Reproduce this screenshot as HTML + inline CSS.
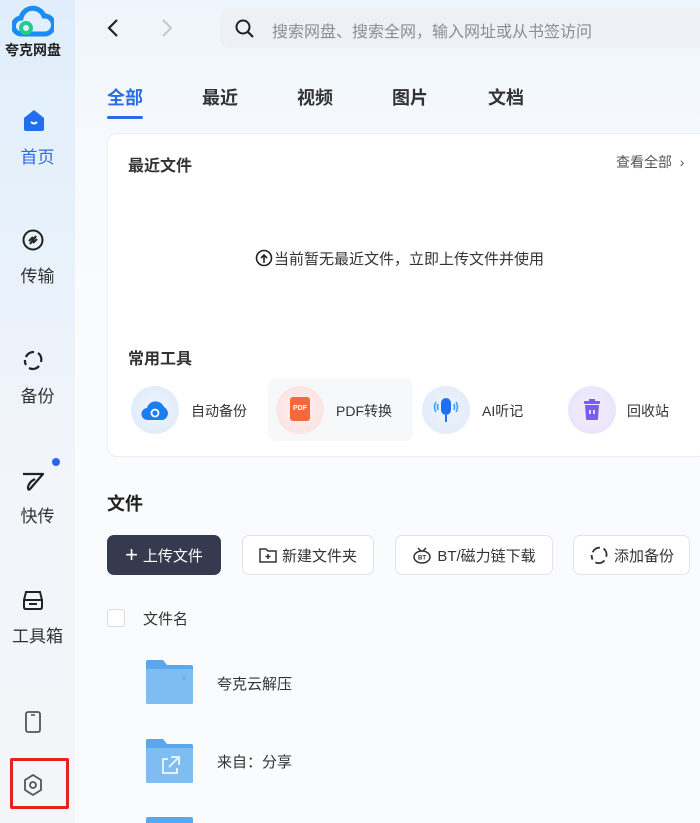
<!DOCTYPE html>
<html style="width:700px;height:823px;overflow:hidden"><head><meta charset="utf-8"><style>
*{margin:0;padding:0;box-sizing:border-box}
body{width:700px;height:823px;overflow:hidden;position:relative;font-family:"Liberation Sans","Noto Sans CJK SC",sans-serif;background:linear-gradient(180deg,#eef5fc 0px,#f6f9fd 140px,#fafbfd 300px,#fafbfc 100%);color:#222}
.a{position:absolute;white-space:nowrap}
#side{position:absolute;left:0;top:0;width:75px;height:823px;background:linear-gradient(180deg,#e0eefb 0,#e9f2fb 280px,#f3f5fa 500px,#f4f5f9 100%)}
.nav{position:absolute;left:0;width:75px;text-align:center;font-size:17px;color:#333}
.card{position:absolute;left:107px;top:133px;width:600px;height:324px;background:#fff;border:1px solid #eceef2;border-radius:10px}
.btn{position:absolute;top:535px;height:40px;border:1px solid #e2e4e9;border-radius:7px;background:#fff;font-size:15px;color:#333;display:flex;align-items:center;justify-content:center;gap:5px}
.circ{position:absolute;width:48px;height:48px;border-radius:50%}
.tl{position:absolute;font-size:14px;color:#333}
.fold{position:absolute;left:146px;width:47px;height:44px}
</style></head><body>
<div id="side">
<svg class="a" style="left:12px;top:4px" width="42" height="34" viewBox="0 0 42 34"><path d="M10 30 A8 8 0 0 1 9 14 A12 12 0 0 1 32 12 A9 9 0 0 1 33 30 Z" fill="none" stroke="#1b8cf5" stroke-width="5"/><circle cx="14" cy="24" r="5" fill="none" stroke="#27c98d" stroke-width="4"/></svg>
<div class="a" style="left:5px;top:40px;font-size:14px;font-weight:bold;color:#222">夸克网盘</div>
<svg class="a" style="left:22px;top:109px" width="24" height="22" viewBox="0 0 24 22"><path d="M2 9 L12 1 L22 9 V20 Q22 22 20 22 H4 Q2 22 2 20Z" fill="#1f6ff0"/><path d="M9 13 Q12 16 15 13" stroke="#fff" stroke-width="2" fill="none"/></svg>
<div class="nav" style="top:143px;color:#2a6ae8">首页</div>
<svg class="a" style="left:22px;top:229px" width="22" height="22" viewBox="0 0 22 22"><circle cx="11" cy="11" r="9.5" fill="none" stroke="#222" stroke-width="2"/><path d="M7 12 L11 8 M11 14 L15 10 M8 15 L14 7" stroke="#222" stroke-width="2"/></svg>
<div class="nav" style="top:262px">传输</div>
<svg class="a" style="left:22px;top:349px" width="22" height="22" viewBox="0 0 22 22"><path d="M4 8 A8 8 0 0 1 12 3 M16 4 A8 8 0 0 1 19 13 M17 17 A8 8 0 0 1 7 19 M4 16 A8 8 0 0 1 3 11" fill="none" stroke="#222" stroke-width="2.2"/></svg>
<div class="nav" style="top:382px">备份</div>
<svg class="a" style="left:21px;top:470px" width="24" height="22" viewBox="0 0 24 22"><path d="M2 4 L22 4 L9 19 Q7 21 7 17 Q8 12 14 9" fill="none" stroke="#222" stroke-width="2.2" stroke-linejoin="round"/></svg>
<div class="a" style="left:52px;top:458px;width:8px;height:8px;border-radius:50%;background:#2a64f0"></div>
<div class="nav" style="top:502px">快传</div>
<svg class="a" style="left:21px;top:589px" width="24" height="22" viewBox="0 0 24 22"><path d="M5 3 H19 L21 11 V18 Q21 20 19 20 H5 Q3 20 3 18 V11Z M3 11 H21 M8 15 H16" fill="none" stroke="#222" stroke-width="2"/></svg>
<div class="nav" style="top:622px">工具箱</div>
<svg class="a" style="left:24px;top:710px" width="18" height="24" viewBox="0 0 18 24"><rect x="2" y="2" width="14" height="20" rx="2" fill="none" stroke="#555" stroke-width="1.8"/><path d="M7 5 H11" stroke="#555" stroke-width="1.6"/></svg>
<div class="a" style="left:10px;top:758px;width:59px;height:51px;border:3px solid #e5231e;border-radius:2px"></div>
<svg class="a" style="left:22px;top:773px" width="22" height="24" viewBox="0 0 22 24"><path d="M11 2 L19 7 V17 L11 22 L3 17 V7Z" fill="none" stroke="#555" stroke-width="1.8" stroke-linejoin="round"/><circle cx="11" cy="12" r="3" fill="none" stroke="#555" stroke-width="1.8"/></svg>
</div>
<svg class="a" style="left:106px;top:18px" width="14" height="20" viewBox="0 0 14 20"><path d="M11 2 L3 10 L11 18" fill="none" stroke="#222" stroke-width="2.2"/></svg>
<svg class="a" style="left:160px;top:18px" width="14" height="20" viewBox="0 0 14 20"><path d="M3 2 L11 10 L3 18" fill="none" stroke="#c4c7cd" stroke-width="2"/></svg>
<div class="a" style="left:220px;top:8px;width:490px;height:40px;border-radius:10px;background:#edf0f5"></div>
<svg class="a" style="left:234px;top:18px" width="22" height="22" viewBox="0 0 22 22"><circle cx="9" cy="9" r="6.5" fill="none" stroke="#222" stroke-width="2"/><path d="M14 14 L19 19" stroke="#222" stroke-width="2.2"/></svg>
<div class="a" style="left:272px;top:18px;font-size:16px;color:#8a8e96">搜索网盘、搜索全网，输入网址或从书签访问</div>
<div class="a" style="left:107px;top:84px;font-size:18px;font-weight:bold;color:#2a6ae8">全部</div>
<div class="a" style="left:107px;top:116px;width:36px;height:3px;background:#2a6ae8;border-radius:2px"></div>
<div class="a" style="left:202px;top:84px;font-size:18px;font-weight:bold;color:#333">最近</div>
<div class="a" style="left:297px;top:84px;font-size:18px;font-weight:bold;color:#333">视频</div>
<div class="a" style="left:392px;top:84px;font-size:18px;font-weight:bold;color:#333">图片</div>
<div class="a" style="left:488px;top:84px;font-size:18px;font-weight:bold;color:#333">文档</div>
<div class="card"></div>
<div class="a" style="left:128px;top:152px;font-size:16px;font-weight:bold;color:#333">最近文件</div>
<div class="a" style="left:616px;top:152px;font-size:14px;color:#555">查看全部 &nbsp;›</div>
<svg class="a" style="left:255px;top:249px" width="18" height="18" viewBox="0 0 18 18"><circle cx="9" cy="9" r="7.5" fill="none" stroke="#222" stroke-width="1.6"/><path d="M9 14 V6 M6 9 L9 6 L12 9" fill="none" stroke="#222" stroke-width="1.6"/></svg>
<div class="a" style="left:274px;top:248px;font-size:15px;color:#333">当前暂无最近文件，立即上传文件并使用</div>
<div class="a" style="left:128px;top:345px;font-size:16px;font-weight:bold;color:#333">常用工具</div>
<div class="a" style="left:268px;top:378px;width:145px;height:63px;background:#f7f8fa;border-radius:8px"></div>
<div class="circ" style="left:131px;top:386px;background:radial-gradient(circle,#eef4fd,#dde9f9)"></div>
<svg class="a" style="left:141px;top:398px" width="28" height="24" viewBox="0 0 28 24"><path d="M7 22 A6 6 0 0 1 6 10 A9 9 0 0 1 23 9 A7 7 0 0 1 22 22Z" fill="#1b7ef0"/><circle cx="14" cy="15" r="3.5" fill="none" stroke="#fff" stroke-width="1.8"/></svg>
<div class="tl" style="left:191px;top:401px">自动备份</div>
<div class="circ" style="left:276px;top:386px;background:radial-gradient(circle,#fdeeee,#fbe1df)"></div>
<div class="a" style="left:290px;top:397px;width:20px;height:24px;background:#f26a3c;border-radius:3px;color:#fff;font-size:7px;font-weight:bold;text-align:center;line-height:24px">PDF</div>
<div class="tl" style="left:336px;top:401px">PDF转换</div>
<div class="circ" style="left:422px;top:386px;background:radial-gradient(circle,#eef4fd,#dfe9f8)"></div>
<svg class="a" style="left:430px;top:394px" width="32" height="32" viewBox="0 0 32 32"><rect x="11" y="4" width="10" height="17" rx="5" fill="#1f6ff0"/><path d="M16 21 V28" stroke="#1f6ff0" stroke-width="2"/><path d="M6 8 Q3 13 6 18 M26 8 Q29 13 26 18 M8 10 Q7 13 8 16 M24 10 Q25 13 24 16" stroke="#3aa0f5" stroke-width="1.6" fill="none"/></svg>
<div class="tl" style="left:482px;top:401px">AI听记</div>
<div class="circ" style="left:568px;top:386px;background:radial-gradient(circle,#f3effd,#e6e0f8)"></div>
<svg class="a" style="left:582px;top:398px" width="20" height="24" viewBox="0 0 20 24"><rect x="2" y="3" width="16" height="3" rx="1" fill="#7a5cf0"/><rect x="7" y="1" width="6" height="3" fill="#7a5cf0"/><path d="M3 7 H17 L16 21 Q16 22 15 22 H5 Q4 22 4 21Z" fill="#7a5cf0"/><path d="M8 12 V16 M12 12 V16" stroke="#fff" stroke-width="1.6"/></svg>
<div class="tl" style="left:627px;top:401px">回收站</div>
<div class="a" style="left:107px;top:490px;font-size:18px;font-weight:bold;color:#222">文件</div>
<div class="btn" style="left:107px;width:114px;background:#353a4f;border-color:#353a4f;color:#fff"><span style="font-size:22px;font-weight:300;line-height:1">+</span>上传文件</div>
<div class="btn" style="left:242px;width:132px"><svg width="18" height="16" viewBox="0 0 18 16"><path d="M1 2 H7 L9 4 H17 V15 H1Z M9 7 V12 M6.5 9.5 H11.5" fill="none" stroke="#333" stroke-width="1.5"/></svg>新建文件夹</div>
<div class="btn" style="left:395px;width:158px"><svg width="20" height="18" viewBox="0 0 20 18"><ellipse cx="10" cy="11" rx="8" ry="6" fill="none" stroke="#333" stroke-width="1.5"/><path d="M6 2 L9 5 M14 2 L11 5" stroke="#333" stroke-width="1.5"/><text x="10" y="13.5" font-size="6" font-weight="bold" text-anchor="middle" fill="#333" font-family="Liberation Sans">BT</text></svg>BT/磁力链下载</div>
<div class="btn" style="left:573px;width:117px"><svg width="20" height="20" viewBox="0 0 22 22"><path d="M4 8 A8 8 0 0 1 12 3 M16 4 A8 8 0 0 1 19 13 M17 17 A8 8 0 0 1 7 19 M4 16 A8 8 0 0 1 3 11" fill="none" stroke="#333" stroke-width="2"/></svg>添加备份</div>
<div class="a" style="left:107px;top:609px;width:18px;height:18px;border:1px solid #d8dbe0;border-radius:3px;background:#fff"></div>
<div class="a" style="left:143px;top:608px;font-size:15px;color:#333">文件名</div>
<svg class="fold" style="top:660px" viewBox="0 0 47 44"><path d="M0 2 Q0 0 2 0 H17 L21 5 H45 Q47 5 47 7 V42 Q47 44 45 44 H2 Q0 44 0 42Z" fill="#5ba7ec"/><rect x="0" y="9" width="47" height="35" rx="2" fill="#7dbdf2"/><path d="M36 17 H40 M36 19 H40" stroke="#5ba7ec" stroke-width="1"/></svg>
<div class="a" style="left:217px;top:673px;font-size:15px;color:#333">夸克云解压</div>
<svg class="fold" style="top:739px" viewBox="0 0 47 44"><path d="M0 2 Q0 0 2 0 H17 L21 5 H45 Q47 5 47 7 V42 Q47 44 45 44 H2 Q0 44 0 42Z" fill="#5ba7ec"/><rect x="0" y="9" width="47" height="35" rx="2" fill="#7dbdf2"/><path d="M22 20 H17 V34 H31 V29 M25 18 H33 V26 M33 18 L23 28" fill="none" stroke="#e5f2fd" stroke-width="2"/></svg>
<div class="a" style="left:217px;top:751px;font-size:15px;color:#333">来自：分享</div>
<div class="a" style="left:146px;top:817px;width:47px;height:6px;background:#5ba7ec;border-radius:2px 2px 0 0"></div>
</body></html>
